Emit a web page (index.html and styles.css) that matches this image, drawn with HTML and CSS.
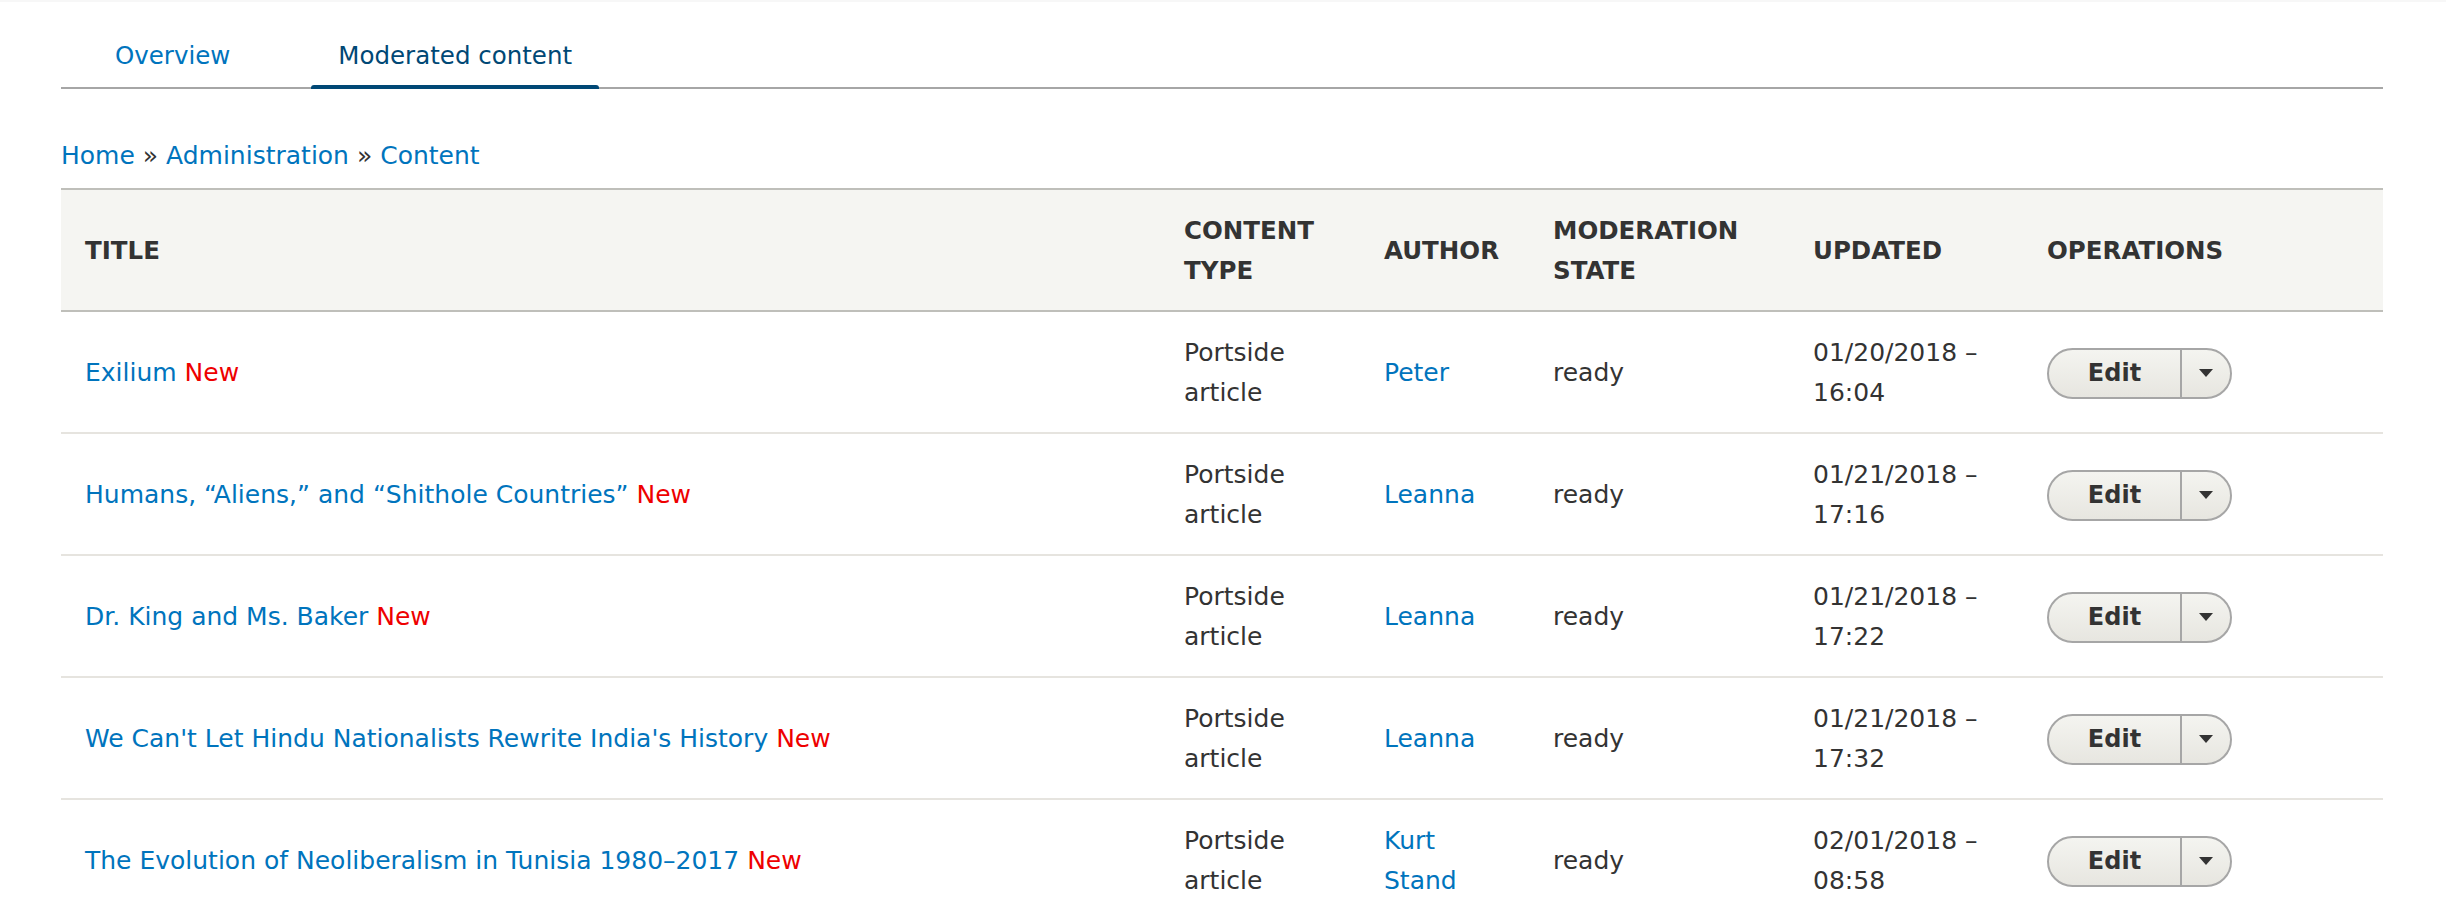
FILE: index.html
```html
<!DOCTYPE html>
<html lang="en">
<head>
    <meta charset="UTF-8">
    <title>Moderated content</title>
    <link rel="stylesheet" href="styles.css">
</head>
<body>
    <div class="page">
        <nav class="tabs">
            <a class="tab" href="#">Overview</a>
            <a class="tab is-active" href="#">Moderated content</a>
        </nav>

        <div class="breadcrumb">
            <a href="#">Home</a> » <a href="#">Administration</a> » <a href="#">Content</a>
        </div>

        <table class="content-table">
            <colgroup>
                <col class="col-title">
                <col class="col-type">
                <col class="col-author">
                <col class="col-state">
                <col class="col-updated">
                <col class="col-ops">
            </colgroup>
            <thead>
                <tr>
                    <th>TITLE</th>
                    <th>CONTENT TYPE</th>
                    <th>AUTHOR</th>
                    <th>MODERATION STATE</th>
                    <th>UPDATED</th>
                    <th>OPERATIONS</th>
                </tr>
            </thead>
            <tbody>
                <tr>
                    <td><a href="#">Exilium</a> <span class="marker">New</span></td>
                    <td>Portside article</td>
                    <td><a href="#">Peter</a></td>
                    <td>ready</td>
                    <td>01/20/2018 – 16:04</td>
                    <td>
                        <div class="dropbutton">
                            <a class="dropbutton-action" href="#">Edit</a>
                            <span class="dropbutton-toggle"><span class="arrow"></span></span>
                        </div>
                    </td>
                </tr>
                <tr>
                    <td><a href="#">Humans, “Aliens,” and “Shithole Countries”</a> <span class="marker">New</span></td>
                    <td>Portside article</td>
                    <td><a href="#">Leanna</a></td>
                    <td>ready</td>
                    <td>01/21/2018 – 17:16</td>
                    <td>
                        <div class="dropbutton">
                            <a class="dropbutton-action" href="#">Edit</a>
                            <span class="dropbutton-toggle"><span class="arrow"></span></span>
                        </div>
                    </td>
                </tr>
                <tr>
                    <td><a href="#">Dr. King and Ms. Baker</a> <span class="marker">New</span></td>
                    <td>Portside article</td>
                    <td><a href="#">Leanna</a></td>
                    <td>ready</td>
                    <td>01/21/2018 – 17:22</td>
                    <td>
                        <div class="dropbutton">
                            <a class="dropbutton-action" href="#">Edit</a>
                            <span class="dropbutton-toggle"><span class="arrow"></span></span>
                        </div>
                    </td>
                </tr>
                <tr>
                    <td><a href="#">We Can't Let Hindu Nationalists Rewrite India's History</a> <span class="marker">New</span></td>
                    <td>Portside article</td>
                    <td><a href="#">Leanna</a></td>
                    <td>ready</td>
                    <td>01/21/2018 – 17:32</td>
                    <td>
                        <div class="dropbutton">
                            <a class="dropbutton-action" href="#">Edit</a>
                            <span class="dropbutton-toggle"><span class="arrow"></span></span>
                        </div>
                    </td>
                </tr>
                <tr>
                    <td><a href="#">The Evolution of Neoliberalism in Tunisia 1980–2017</a> <span class="marker">New</span></td>
                    <td>Portside article</td>
                    <td><a href="#">Kurt Stand</a></td>
                    <td>ready</td>
                    <td>02/01/2018 – 08:58</td>
                    <td>
                        <div class="dropbutton">
                            <a class="dropbutton-action" href="#">Edit</a>
                            <span class="dropbutton-toggle"><span class="arrow"></span></span>
                        </div>
                    </td>
                </tr>
            </tbody>
        </table>
    </div>
</body>
</html>
```

FILE: styles.css
```css
:root {
    --link: #0074bd;
    --active: #004875;
    --text: #333;
    --rule: #a6a6a6;
    --head-bg: #f5f5f2;
    --head-border: #bfbfba;
    --row-border: #e6e4df;
}

body {
    margin: 0;
    border-top: 2px solid #f7f7f7;
    font-family: "DejaVu Sans", "Liberation Sans", sans-serif;
    font-size: 25px;
    line-height: 40px;
    color: var(--text);
    background: #fff;
}

a {
    color: var(--link);
    text-decoration: none;
}

.page {
    padding: 23px 63px 0 61px;
}

/* tabs */
.tabs {
    display: flex;
    gap: 54px;
    padding-left: 27px;
    border-bottom: 2px solid var(--rule);
}

.tab {
    position: relative;
    padding: 11px 27px;
    font-size: 24.5px;
}

.tab.is-active {
    color: var(--active);
}

.tab.is-active::after {
    content: "";
    position: absolute;
    left: 0;
    right: 0;
    bottom: -2px;
    height: 4px;
    background: var(--active);
    border-radius: 3px 3px 0 0;
}

.breadcrumb {
    margin-top: 47px;
}

/* table */
.content-table {
    width: 100%;
    margin-top: 12px;
    table-layout: fixed;
    border-collapse: separate;
    border-spacing: 0;
}

.col-title { width: 1099px; }
.col-type { width: 200px; }
.col-author { width: 169px; }
.col-state { width: 260px; }
.col-updated { width: 234px; }
.col-ops { width: 360px; }

.content-table th {
    padding: 21px 24px 19px;
    text-align: left;
    font-size: 24.5px;
    font-weight: bold;
    background: var(--head-bg);
    border-top: 2px solid var(--head-border);
    border-bottom: 2px solid var(--head-border);
    vertical-align: middle;
}

.content-table td {
    padding: 21px 24px 19px;
    vertical-align: middle;
    border-bottom: 2px solid var(--row-border);
}

.marker {
    color: #ee0000;
}

/* dropbutton */
.dropbutton {
    display: flex;
    width: max-content;
    height: 51px;
    box-sizing: border-box;
    border: 2px solid var(--rule);
    border-radius: 26px;
    background: linear-gradient(#f4f4f0, #e7e6e0);
    overflow: hidden;
}

.dropbutton-action {
    width: 131px;
    display: flex;
    align-items: center;
    justify-content: center;
    border-right: 2px solid var(--rule);
    color: var(--text);
    font-weight: bold;
    font-size: 24px;
}

.dropbutton-toggle {
    width: 48px;
    display: flex;
    align-items: center;
    justify-content: center;
}

.arrow {
    width: 0;
    height: 0;
    border-left: 7px solid transparent;
    border-right: 7px solid transparent;
    border-top: 8px solid var(--text);
}
```
